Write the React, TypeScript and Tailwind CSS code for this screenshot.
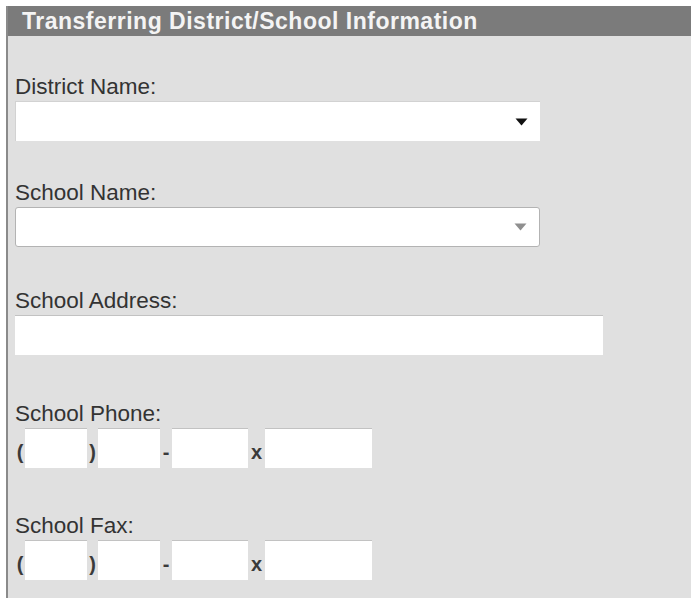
import type { ReactNode } from 'react';

const font = { fontFamily: '"Liberation Sans", Arial, sans-serif' };

function Label({ children }: { children: ReactNode }) {
  return <div className="text-[22.5px] leading-6 text-[#333333] mb-[2px]">{children}</div>;
}

function Caret({ muted }: { muted?: boolean }) {
  return (
    <svg width="13" height="8" viewBox="0 0 13 8" className="mr-[12px]">
      <path d="M0.5 0.5 H12.5 L6.5 7.5 Z" fill={muted ? '#8f8f8f' : '#111111'} />
    </svg>
  );
}

function SelectBox({ muted }: { muted?: boolean }) {
  return (
    <div
      className={
        'w-[525px] h-10 bg-white flex items-center justify-end ' +
        (muted
          ? 'border border-[#b3b3b3] rounded-[3px]'
          : 'border-t border-l border-[#d2d2d2]')
      }
    >
      <Caret muted={muted} />
    </div>
  );
}

function Box({ w }: { w: string }) {
  return <input type="text" readOnly className={`${w} h-10 bg-white border-t border-[#c2c2c2] outline-none`} />;
}

function Sep({ children, w }: { children: ReactNode; w: string }) {
  return (
    <span className={`${w} self-end pb-[4px] text-[20px] leading-6 font-bold text-[#3a3a3a] text-center`}>
      {children}
    </span>
  );
}

function PhoneRow() {
  return (
    <div className="flex items-stretch h-10">
      <Sep w="w-[10px]">(</Sep>
      <Box w="w-[62px]" />
      <Sep w="w-[11px]">)</Sep>
      <Box w="w-[62px]" />
      <Sep w="w-[12px]">-</Sep>
      <Box w="w-[76px]" />
      <Sep w="w-[17px]">x</Sep>
      <Box w="w-[107px]" />
    </div>
  );
}

export default function App() {
  return (
    <div className="h-[598px] bg-white pt-[6px] pl-[6px] flex flex-col overflow-hidden" style={font}>
      <div className="flex-1 flex flex-col bg-[#e0e0e0] border-l-2 border-[#8a8a8a]">
        <div className="h-[30px] bg-[#7b7b7b] flex items-center pl-[14px]">
          <h2 className="text-[23px] leading-none font-bold tracking-[0.5px] text-[#f4f4f4]">
            Transferring District/School Information
          </h2>
        </div>

        <div className="pl-[7px]">
          <div className="mt-[39px]">
            <Label>District Name:</Label>
            <SelectBox />
          </div>

          <div className="mt-10">
            <Label>School Name:</Label>
            <SelectBox muted />
          </div>

          <div className="mt-[42px]">
            <Label>School Address:</Label>
            <Box w="w-[588px]" />
          </div>

          <div className="mt-[47px]">
            <Label>School Phone:</Label>
            <PhoneRow />
          </div>

          <div className="mt-[46px]">
            <Label>School Fax:</Label>
            <PhoneRow />
          </div>
        </div>
      </div>
    </div>
  );
}
